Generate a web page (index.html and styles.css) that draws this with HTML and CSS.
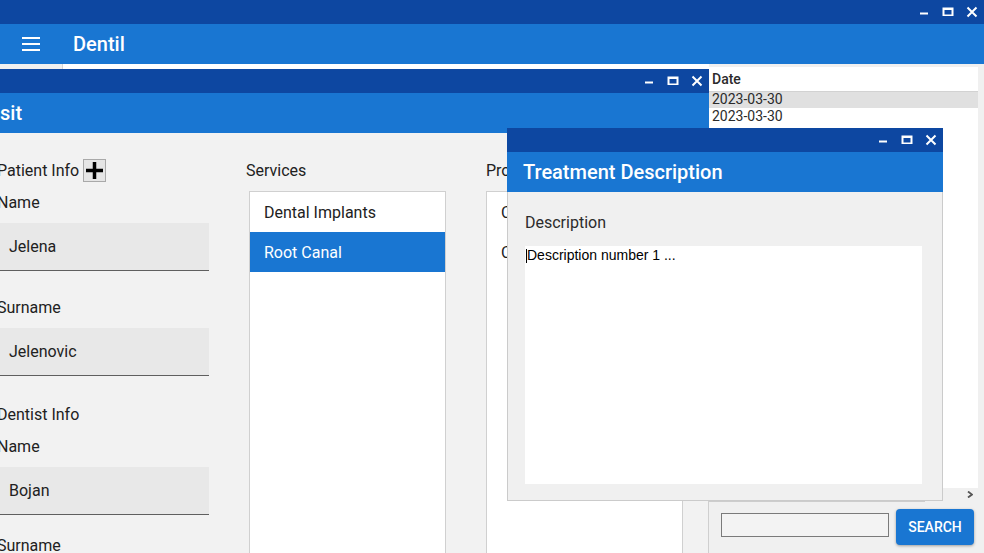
FILE: index.html
```html
<!DOCTYPE html>
<html lang="en">
<head>
<meta charset="utf-8">
<title>Dentil</title>
<link rel="stylesheet" href="styles.css">
</head>
<body>
<div class="app">
  <div class="titlebar">
    <div class="wincontrols">
      <svg viewBox="0 0 24 24"><rect x="8" y="12.5" width="8" height="2"/></svg>
      <svg viewBox="0 0 24 24"><path fill-rule="evenodd" d="M6.5 7.5H17.5V16H6.5Z M8.5 10H15.5V14.5H8.5Z"/></svg>
      <svg viewBox="0 0 24 24" class="ctl-close"><path d="M7.5 7.5L16.5 16.5M16.5 7.5L7.5 16.5"/></svg>
    </div>
  </div>
  <header class="appbar">
    <svg class="hamburger" viewBox="0 0 18 16"><rect x="0" y="1" width="18" height="2"/><rect x="0" y="7" width="18" height="2"/><rect x="0" y="13" width="18" height="2"/></svg>
    <span class="app-title">Dentil</span>
  </header>
  <div class="main">
    <aside class="sidebar"></aside>
    <div class="content"></div>
    <section class="right-panel">
      <div class="table-area">
        <div class="date-table">
          <div class="th">Date</div>
          <div class="tr selected">2023-03-30</div>
          <div class="tr">2023-03-30</div>
        </div>
        <div class="vscroll"></div>
      </div>
      <div class="hscroll">
        <svg class="chevron" viewBox="0 0 6 7"><path d="M1 0.5L5 3.5L1 6.5"/></svg>
      </div>
      <div class="hthumb-track"><div class="hthumb"></div></div>
      <div class="search-bar">
        <input class="search-input" type="text">
        <button class="search-btn">SEARCH</button>
      </div>
    </section>
  </div>
</div>

<div class="window visit-window">
  <div class="win-titlebar">
    <div class="wincontrols">
      <svg viewBox="0 0 24 24"><rect x="8" y="12.5" width="8" height="2"/></svg>
      <svg viewBox="0 0 24 24"><path fill-rule="evenodd" d="M6.5 7.5H17.5V16H6.5Z M8.5 10H15.5V14.5H8.5Z"/></svg>
      <svg viewBox="0 0 24 24" class="ctl-close"><path d="M7.5 7.5L16.5 16.5M16.5 7.5L7.5 16.5"/></svg>
    </div>
  </div>
  <div class="win-header visit-header"><h1 class="win-title">Visit</h1></div>
  <div class="win-body visit-body">
    <div class="col info-col">
      <div class="section-head">Patient Info <button class="add-btn"><svg viewBox="0 0 17 17"><rect x="0" y="6.75" width="17" height="3.5"/><rect x="6.75" y="0" width="3.5" height="17"/></svg></button></div>
      <div class="field">
        <label class="field-label">Name</label>
        <div class="text-input">Jelena</div>
      </div>
      <div class="field">
        <label class="field-label">Surname</label>
        <div class="text-input">Jelenovic</div>
      </div>
      <div class="section-head">Dentist Info</div>
      <div class="field field-compact">
        <label class="field-label">Name</label>
        <div class="text-input">Bojan</div>
      </div>
      <div class="field">
        <label class="field-label">Surname</label>
        <div class="text-input">Bojanic</div>
      </div>
    </div>
    <div class="col">
      <div class="section-head col-label services-label">Services</div>
      <ul class="list">
        <li>Dental Implants</li>
        <li class="selected">Root Canal</li>
      </ul>
    </div>
    <div class="col">
      <div class="section-head col-label">Procedures</div>
      <ul class="list">
        <li>Cleaning</li>
        <li>Crown</li>
      </ul>
    </div>
  </div>
</div>

<div class="window treatment-window">
  <div class="win-titlebar">
    <div class="wincontrols">
      <svg viewBox="0 0 24 24"><rect x="8" y="12.5" width="8" height="2"/></svg>
      <svg viewBox="0 0 24 24"><path fill-rule="evenodd" d="M6.5 7.5H17.5V16H6.5Z M8.5 10H15.5V14.5H8.5Z"/></svg>
      <svg viewBox="0 0 24 24" class="ctl-close"><path d="M7.5 7.5L16.5 16.5M16.5 7.5L7.5 16.5"/></svg>
    </div>
  </div>
  <div class="win-header"><h1 class="win-title">Treatment Description</h1></div>
  <div class="win-body treatment-body">
    <label class="field-label desc-label">Description</label>
    <div class="textarea"><span class="caret"></span>Description number 1 ...</div>
  </div>
</div>
</body>
</html>
```

FILE: styles.css
```css
* { box-sizing: border-box; }

html, body {
  margin: 0;
  padding: 0;
}

body {
  position: relative;
  width: 984px;
  height: 553px;
  overflow: hidden;
  background: #f0f0f0;
  font-family: Roboto, "Noto Sans", sans-serif;
  color: #212121;
}

/* ---------- main window ---------- */
.app {
  display: flex;
  flex-direction: column;
  height: 553px;
}

.titlebar,
.win-titlebar {
  height: 24px;
  background: #0d47a1;
  display: flex;
  justify-content: flex-end;
  flex-shrink: 0;
}

.wincontrols {
  display: flex;
}

.wincontrols svg {
  width: 24px;
  height: 24px;
  display: block;
  fill: #fff;
}

.wincontrols .ctl-close path {
  fill: none;
  stroke: #fff;
  stroke-width: 2;
}

.appbar {
  height: 40px;
  background: #1976d2;
  display: flex;
  align-items: center;
  padding-left: 22px;
  color: #fff;
  flex-shrink: 0;
}

.hamburger {
  width: 18px;
  height: 16px;
  fill: #fff;
  margin-right: 33px;
}

.app-title {
  font-size: 20px;
  font-weight: 500;
}

.main {
  flex: 1;
  display: flex;
  min-height: 0;
}

.sidebar {
  width: 63px;
  background: #f0f0f0;
  border-right: 1px solid #d6d6d6;
}

.content {
  flex: 1;
  background: #fff;
}

.right-panel {
  width: 275px;
  display: flex;
  flex-direction: column;
  padding-top: 3px;
  background: #f0f0f0;
}

.table-area {
  flex: 1;
  display: flex;
}

.date-table {
  flex: 1;
  background: #fff;
  font-size: 14px;
  color: #2b2b2b;
}

.th {
  height: 24px;
  line-height: 24px;
  padding-left: 3px;
  font-weight: 500;
}

.tr {
  height: 17px;
  line-height: 17px;
  padding-left: 3px;
}

.tr.selected {
  background: #e0e0e0;
  box-shadow: inset 0 1px 0 #d2d2d2;
}

.vscroll {
  width: 6px;
}

.hscroll {
  height: 12px;
  display: flex;
  justify-content: flex-end;
  align-items: center;
  padding-right: 11px;
}

.chevron {
  width: 6px;
  height: 7px;
  display: block;
}

.chevron path {
  fill: none;
  stroke: #555;
  stroke-width: 1.8;
}

.hthumb-track {
  height: 2px;
}

.hthumb {
  width: 217px;
  height: 2px;
  margin-left: -1px;
  background: #cdcdcd;
}

.search-bar {
  height: 51px;
  display: flex;
  align-items: flex-start;
  padding: 7px 0 0 12px;
  gap: 7px;
}

.search-input {
  width: 168px;
  height: 24px;
  margin: 4px 0 0;
  border: 1px solid #7a7a7a;
  background: #f3f3f3;
  padding: 0;
}

.search-btn {
  width: 78px;
  height: 36px;
  border: none;
  border-radius: 4px;
  background: #1976d2;
  color: #fff;
  font-family: Roboto, "Noto Sans", sans-serif;
  font-size: 14px;
  font-weight: 500;
  padding: 0;
  box-shadow: 0 1px 3px rgba(0, 0, 0, 0.35);
}

/* ---------- floating windows ---------- */
.window {
  position: absolute;
  display: flex;
  flex-direction: column;
  overflow: hidden;
}

.visit-window {
  left: -20px;
  top: 69px;
  width: 729px;
  height: 484px;
}

.treatment-window {
  left: 507px;
  top: 128px;
  width: 436px;
  height: 373px;
}

.win-header {
  height: 40px;
  background: #1976d2;
  display: flex;
  align-items: center;
  padding-left: 16px;
  flex-shrink: 0;
}

.visit-header {
  padding-left: 2px;
}

.win-title {
  margin: 0;
  font-size: 20px;
  font-weight: 500;
  color: #fff;
}

.win-body {
  flex: 1;
  min-height: 0;
}

/* visit window body */
.visit-body {
  background: #f2f2f2;
  border-right: 1px solid #cfcfcf;
  display: grid;
  grid-template-columns: 212px 197px 197px;
  column-gap: 40px;
  align-items: start;
  padding: 26px 0 0 17px;
}

.section-head {
  height: 23px;
  display: flex;
  align-items: center;
  font-size: 16px;
  margin-bottom: 11px;
}

.col-label {
  margin-bottom: 9px;
}

.services-label {
  margin-left: -3px;
}

.add-btn {
  width: 23px;
  height: 23px;
  margin-left: 4px;
  padding: 0;
  border: 1px solid #a9a9a9;
  background: #e5e5e5;
  display: flex;
  align-items: center;
  justify-content: center;
}

.add-btn svg {
  width: 17px;
  height: 17px;
  display: block;
  fill: #000;
}

.field {
  margin-bottom: 27px;
}

.field-compact {
  margin-bottom: 21px;
}

.field-label {
  display: block;
  font-size: 16px;
  line-height: 20px;
  margin-bottom: 10px;
}

.text-input {
  height: 48px;
  background: #e8e8e8;
  border-bottom: 1px solid #5f5f5f;
  padding-left: 12px;
  display: flex;
  align-items: center;
  font-size: 16px;
}

.list {
  list-style: none;
  margin: 0;
  padding: 0;
  height: 400px;
  background: #fff;
  border: 1px solid #d0d0d0;
}

.list li {
  height: 40px;
  display: flex;
  align-items: center;
  padding-left: 14px;
  font-size: 16px;
}

.list li.selected {
  background: #1976d2;
  color: #fff;
}

/* treatment window body */
.treatment-body {
  background: #f0f0f0;
  border: 1px solid #cbcbcb;
  border-top: none;
  padding: 21px 20px 16px 17px;
  display: flex;
  flex-direction: column;
}

.desc-label {
  margin-bottom: 13px;
  color: #2b2b2b;
}

.textarea {
  flex: 1;
  background: #fff;
  font-family: "Liberation Sans", Arial, sans-serif;
  font-size: 14px;
  color: #000;
  padding: 1px 0 0 1px;
}

.caret {
  display: inline-block;
  width: 1px;
  height: 14px;
  background: #000;
  vertical-align: -3px;
}
```
